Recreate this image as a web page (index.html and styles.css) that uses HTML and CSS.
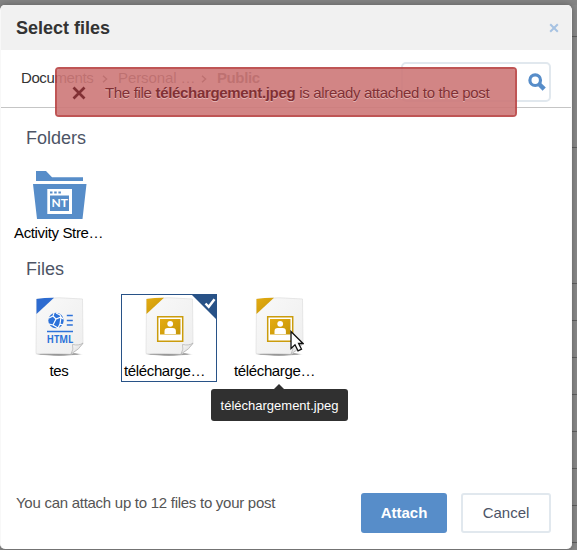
FILE: index.html
```html
<!DOCTYPE html>
<html lang="en">
<head>
<meta charset="utf-8">
<title>Select files</title>
<link rel="stylesheet" href="styles.css">
</head>
<body>
<svg class="defs" aria-hidden="true">
  <defs>
    <linearGradient id="paper" x1="0" y1="0" x2="1" y2="1"><stop offset="0" stop-color="#f9f9f9"/><stop offset="1" stop-color="#eee"/></linearGradient>
    <linearGradient id="gold" x1="0" y1="0" x2="1" y2="1"><stop offset="0" stop-color="#e5ac12"/><stop offset="1" stop-color="#c59607"/></linearGradient>
    <linearGradient id="fold" x1="0" y1="0" x2="1" y2="1"><stop offset="0" stop-color="#fff"/><stop offset="1" stop-color="#cfcfcf"/></linearGradient>
    <radialGradient id="shade"><stop offset="0" stop-color="#777"/><stop offset=".75" stop-color="#aaa"/><stop offset="1" stop-color="#fff" stop-opacity="0"/></radialGradient>
    <symbol id="sheet" viewBox="0 0 52 60">
      <ellipse cx="25" cy="57.200" rx="25" ry="1.800" fill="url(#shade)"/>
      <path d="M2.500 2Q25-.5 48.500 2L49 47L38 57L2 56.500Z" fill="url(#paper)" stroke="#dedede" stroke-width=".7"/>
      <path d="M37 57Q40 52 38.500 47.500Q45 49 49 46Q46 52 37 57Z" fill="url(#fold)" stroke="#b5b5b5" stroke-width=".8"/>
    </symbol>
    <symbol id="image-file" viewBox="0 0 52 60">
      <use href="#sheet" width="52" height="60"/>
      <path d="M2.500 2Q10 .8 20 .8L2.500 17Z" fill="url(#gold)"/>
      <path d="M13.700 19.700h25v24.600h-25z" fill="#fff" stroke="#cb9c0c" stroke-width="1.500"/>
      <path d="M16 22h20.500v15.500H16z" fill="url(#gold)"/>
      <circle cx="26.200" cy="26.800" r="2.900" fill="#fff"/>
      <path d="M20.500 37v-3q0-3 3.200-3h5q3.200 0 3.200 3v3z" fill="#fff"/>
    </symbol>
  </defs>
</svg>

<main class="modal">
  <header class="modal-header">
    <h1>Select files</h1>
    <svg class="close" viewBox="0 0 10 10"><path d="M1.200 1.200l7.600 7.600M8.800 1.200L1.200 8.800"/></svg>
  </header>

  <div class="toolbar">
    <nav class="crumbs">
      <span class="crumb-root">Documents</span>
      <svg class="sep" viewBox="0 0 6 8"><path d="M1 .7L4.600 4 1 7.300"/></svg>
      <span class="crumb-drive">Personal …</span>
      <svg class="sep" viewBox="0 0 6 8"><path d="M1 .7L4.600 4 1 7.300"/></svg>
      <b>Public</b>
    </nav>
    <div class="search">
      <svg viewBox="0 0 18 18"><circle cx="7.200" cy="7.200" r="5.300"/><path d="M11 11l5.200 5.200"/></svg>
    </div>
  </div>

  <section class="browser">
    <h2>Folders</h2>
    <div class="tiles folders">
      <div class="tile">
        <svg class="folder-icon" viewBox="0 0 54 49">
          <path fill="#578dc9" d="M3 0h10l6 6.300h31V10H3zM0 13h53.500l-4 35H4z"/>
          <path fill="#fff" d="M14.300 18h24.700v25H14.300z"/>
          <path fill="#578dc9" d="M17 20.500h2.500v2H17zM21.200 20.500h2.500v2h-2.500zM25.400 20.500h2.500v2h-2.500zM17 24.500h19v15.500H17z"/>
          <text x="18.500" y="36.300" textLength="16.500">NT</text>
        </svg>
        <span class="label clipped">Activity Stre…</span>
      </div>
    </div>
    <h2>Files</h2>
    <div class="tiles">
      <div class="tile">
        <svg class="file-icon" viewBox="0 0 52 60">
          <use href="#sheet" width="52" height="60"/>
          <path d="M2.500 2Q10 .8 20 .8L2.500 17Z" fill="#2d6bd0"/>
          <circle cx="22" cy="23.500" r="7.700" fill="#2d72d9"/>
          <path d="M15 21l4-2 3 3 5-2 2 2M22 22l-3 6 5 3M19 28l-4-1M27 20l-1 7 3 1M22 16l4 2 1 2M19 19l1-3M24 31l2-4" fill="none" stroke="#fff" stroke-width="1.200"/>
          <path d="M32.800 18.500h6M32.800 23.500h6M32.800 28h6M13 34.500h26" stroke="#2d72d9" stroke-width="1.700"/>
          <text class="html-mark" x="12.800" y="46" textLength="26.500" lengthAdjust="spacingAndGlyphs">HTML</text>
        </svg>
        <span class="label">tes</span>
      </div>
      <div class="tile selected">
        <svg class="file-icon"><use href="#image-file"/></svg>
        <span class="label clipped">télécharge…</span>
        <svg class="tick" viewBox="0 0 26 26"><path fill="#285287" d="M0 0h26v26z"/><path d="M14.500 9.500l3.200 3.300 5.800-7.500" fill="none" stroke="#fff" stroke-width="2.500"/></svg>
      </div>
      <div class="tile">
        <svg class="file-icon"><use href="#image-file"/></svg>
        <span class="label clipped">télécharge…</span>
        <div class="tooltip">téléchargement.jpeg</div>
        <svg class="pointer" viewBox="0 0 14 22"><path d="M1 1.500v17l4-3.700 3 6 3.500-1.600-2.900-5.700H13z" fill="#fff" stroke="#111" stroke-width="1.300"/></svg>
      </div>
    </div>
  </section>

  <footer class="modal-footer">
    <p>You can attach up to 12 files to your post</p>
    <button class="primary">Attach</button>
    <button>Cancel</button>
  </footer>

  <div class="alert">
    <svg viewBox="0 0 14 14"><path d="M1.500 1.500l11 11M12.500 1.500l-11 11"/></svg>
    <span>The file <b>téléchargement.jpeg</b> is already attached to the post</span>
  </div>
</main>
<div class="page-behind"><i></i><i></i><i></i><i></i><i></i><i></i><i></i><i></i><i></i><i></i></div>
</body>
</html>
```
FILE: styles.css
```css
* { box-sizing: border-box; }
body {
  margin: 0;
  height: 550px;
  padding-top: 5px;
  overflow: hidden;
  display: flex;
  background: #858585;
  font: 15px/20px "Liberation Sans", Arial, sans-serif;
  color: #333;
}
.defs { position: absolute; width: 0; height: 0; }
.modal {
  position: relative;
  width: 572px;
  height: 544px;
  display: flex;
  flex-direction: column;
  background: #fff;
  border: solid #f8f8f8;
  border-width: 0 1px;
  border-radius: 5px;
  box-shadow: 0 0 7px rgba(0, 0, 0, .3);
}
.modal-header {
  height: 45px;
  flex: none;
  display: flex;
  align-items: center;
  justify-content: space-between;
  padding: 0 12px 0 15px;
  background: #f1f1f1;
  border-radius: 4px 4px 0 0;
}
h1 { margin: 0; font-size: 18px; line-height: 24px; }
.close { width: 10px; height: 10px; fill: none; stroke: #a6c2e2; stroke-width: 2; }
.toolbar {
  height: 58px;
  flex: none;
  display: flex;
  justify-content: space-between;
  padding: 12px 20px 0;
  border-bottom: 1px solid #c5c5c5;
}
.crumbs { display: flex; align-items: center; height: 32px; white-space: nowrap; letter-spacing: -.4px; }
.crumb-root { width: 72px; }
.crumb-drive { width: 74px; letter-spacing: -.1px; }
.sep { width: 6px; height: 8px; margin: 2px 10px 0 9px; fill: none; stroke: #333; stroke-width: 1.5; }
.search {
  width: 150px;
  height: 40px;
  display: flex;
  align-items: center;
  justify-content: flex-end;
  padding-right: 3px;
  border: 2px solid #e1e8ee;
  border-radius: 5px;
}
.search svg { width: 18px; height: 18px; fill: none; stroke: #578dc9; stroke-width: 3.200; }
.search path { stroke-width: 4.5; }
.browser { flex: 1; padding: 18px 10px 0; }
h2 { margin: 0 0 0 15px; font-size: 18px; font-weight: 400; line-height: 24px; color: #4d5466; }
.tiles { display: flex; gap: 14px; margin-top: 13px; }
.folders { margin: 6px 0 13px; }
.tile {
  position: relative;
  width: 96px;
  height: 88px;
  display: flex;
  flex-direction: column;
  align-items: center;
  justify-content: space-between;
  border: 1px solid transparent;
  color: #000;
}
.selected { border-color: #285287; }
.file-icon { width: 52px; height: 60px; margin: 2px 0 0 1px; }
.folder-icon { width: 54px; height: 49px; margin: 14px 0 0 1px; }
.folder-icon text { font: bold 12px Lato, sans-serif; fill: #fff; }
.html-mark { font: bold 11px "Open Sans", sans-serif; fill: #2d72d9; }
.label { width: 90px; white-space: nowrap; text-align: center; letter-spacing: -.36px; }
.clipped { text-align: left; }
.tick { position: absolute; top: -1px; right: -1px; width: 26px; height: 26px; }
.tooltip {
  position: absolute;
  top: 94px;
  left: -21px;
  width: 137px;
  height: 32px;
  border-radius: 3px;
  background: #303030;
  color: #fff;
  font-size: 13px;
  line-height: 33px;
  text-align: center;
}
.tooltip::before {
  content: "";
  position: absolute;
  top: -5px;
  left: 63px;
  border: solid transparent;
  border-width: 0 5px 5px;
  border-bottom-color: #303030;
}
.pointer { position: absolute; left: 58px; top: 35px; width: 14px; height: 22px; }
.modal-footer { display: flex; gap: 14px; height: 56px; padding: 0 20px 0 15px; }
.modal-footer p { flex: 1; margin: 0; color: #555; letter-spacing: -.27px; }
button {
  width: 90px;
  height: 40px;
  border: 2px solid #e1e8ee;
  border-radius: 3px;
  background: #fff;
  color: #4d5466;
  font: inherit;
}
.primary { width: 86px; border: 0; background: #578dc9; color: #fff; font-weight: 700; }
.alert {
  position: absolute;
  left: 54px;
  top: 62px;
  width: 462px;
  height: 50px;
  display: flex;
  align-items: center;
  gap: 19px;
  padding: 1px 0 0 15px;
  border: 2px solid rgba(184, 67, 67, .9);
  border-radius: 4px;
  background: rgba(205, 120, 120, .9);
  background-clip: padding-box;
  color: #813034;
  text-shadow: 0 1px rgba(255, 255, 255, .4);
  letter-spacing: -.32px;
  white-space: nowrap;
}
.alert svg { width: 14px; height: 14px; fill: none; stroke: #813034; stroke-width: 2.7; }
.page-behind { flex: 1; z-index: -1; padding-top: 31px; background: #898989; }
.page-behind i { display: block; height: 1px; margin-bottom: 36px; background: #5f5f5f; }
.page-behind i:nth-child(1) { margin-bottom: 110px; }
.page-behind i:nth-child(2) { margin-bottom: 135px; }
```
